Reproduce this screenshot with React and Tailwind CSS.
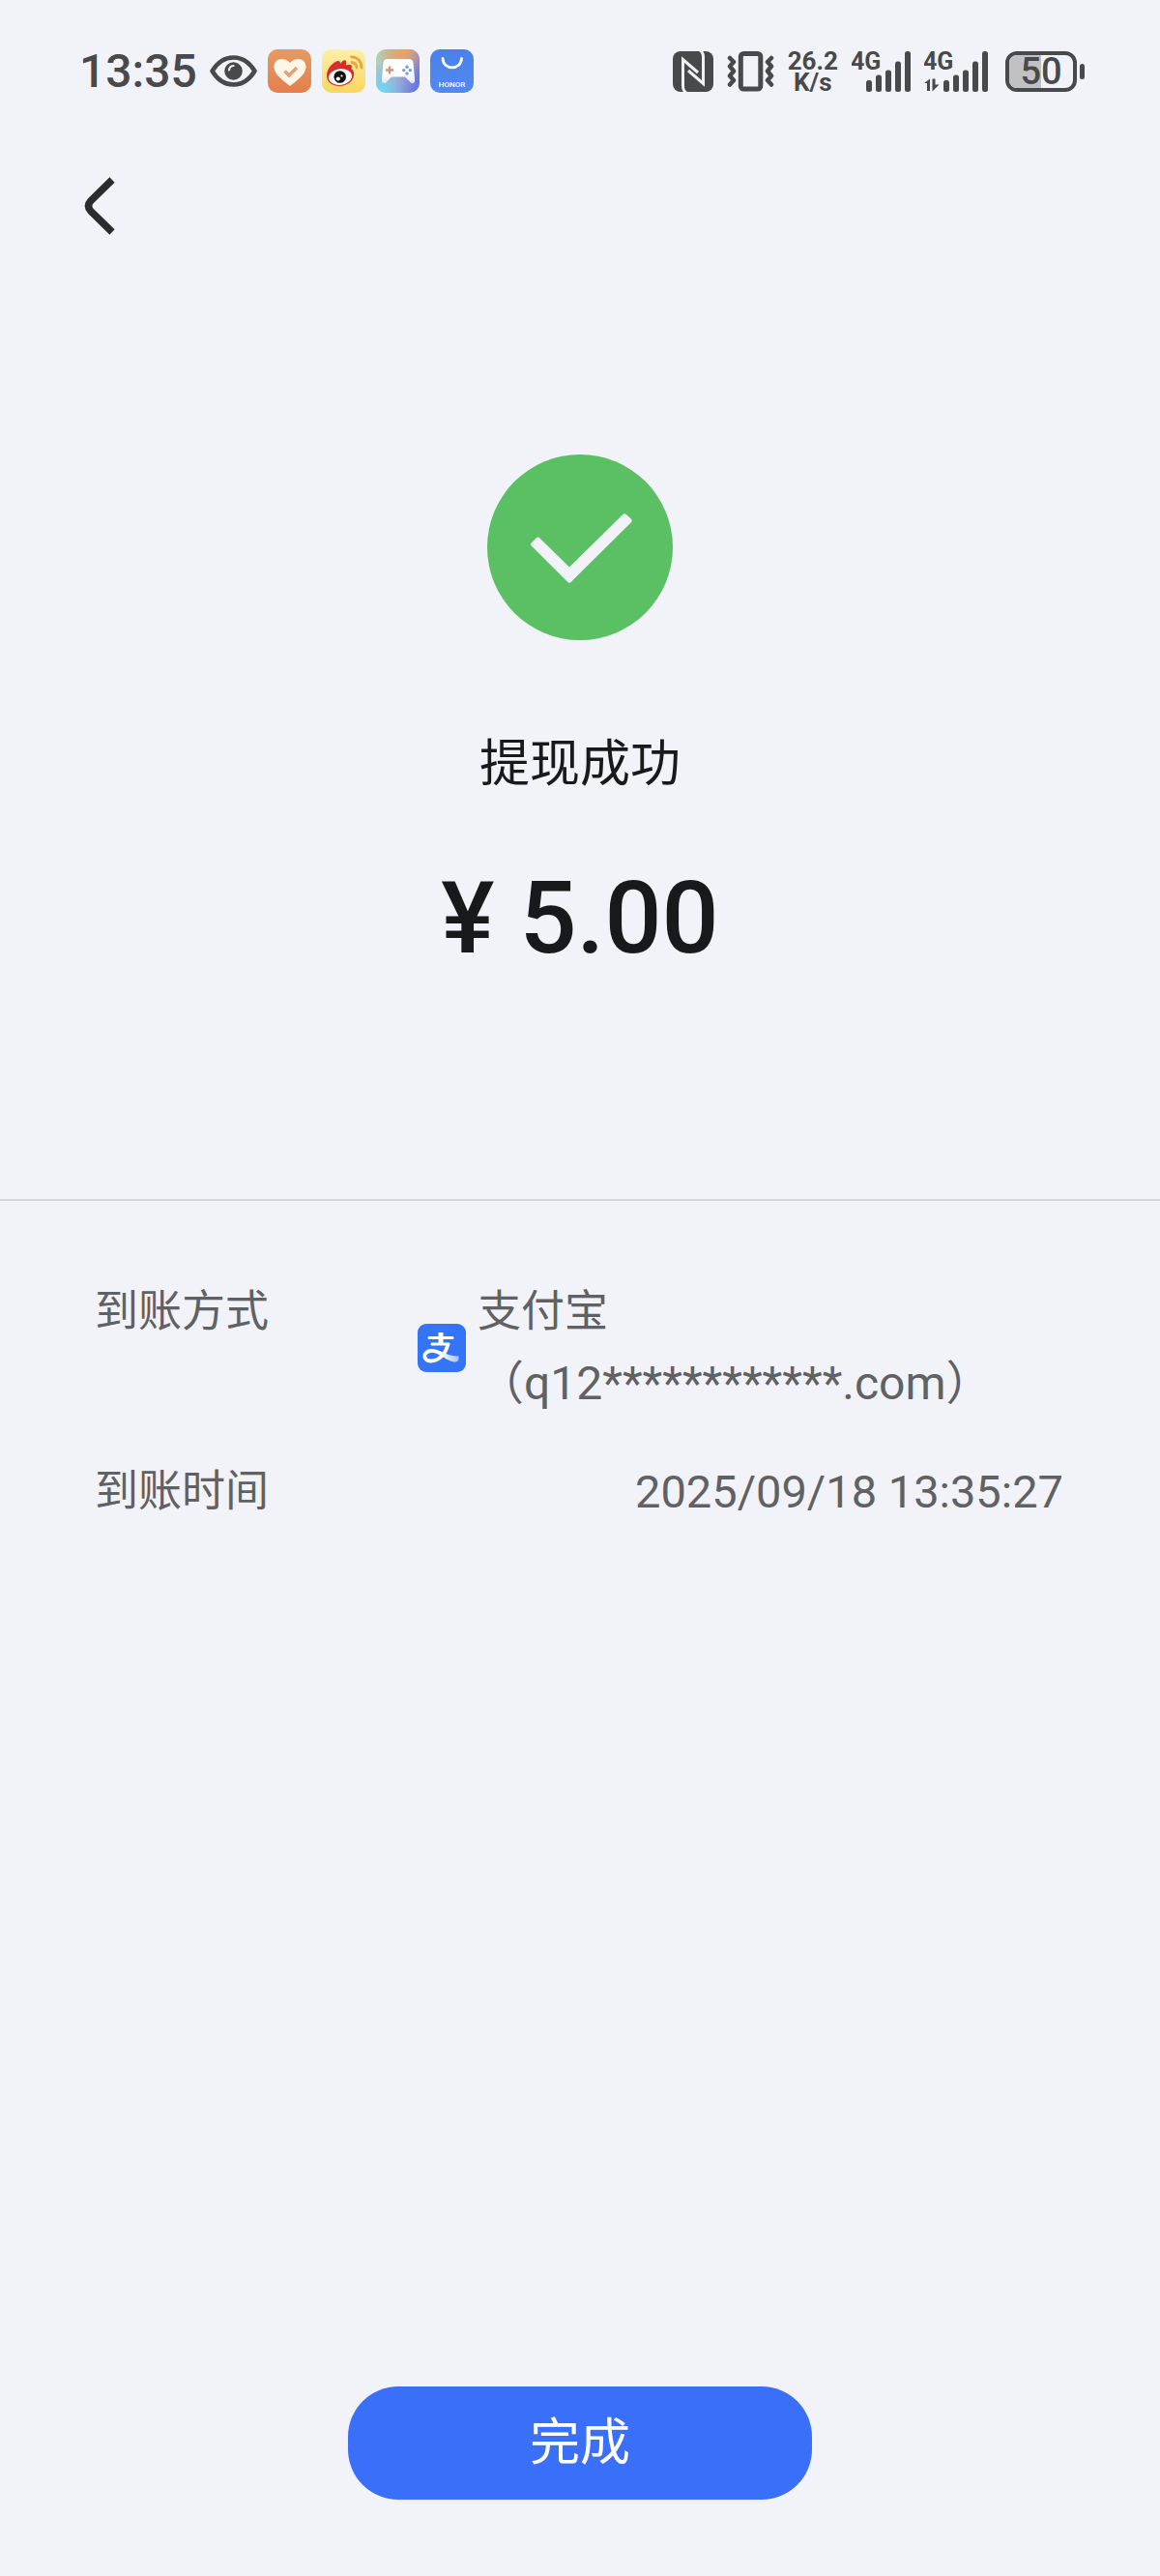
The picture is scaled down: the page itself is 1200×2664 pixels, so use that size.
import React from 'react';

const details = [
  { label: '到账方式', value: '支付宝', account: '（q12************.com）' },
  { label: '到账时间', value: '2025/09/18 13:35:27' },
];

function EyeIcon() {
  return (
    <svg width="49" height="33" viewBox="0 0 49 33" aria-hidden="true">
      <path d="M2.5 16.5C8 7.5 15.500 2.500 24.500 2.500S41 7.500 46.500 16.500C41 25.500 33.500 30.500 24.500 30.500S8 25.500 2.500 16.500Z" fill="none" stroke="#48494b" strokeWidth="4.500" strokeLinejoin="round" />
      <circle cx="24.500" cy="16.500" r="9.300" fill="#48494b" />
      <path d="M20 15.500A5 5 0 0 1 24.500 11" fill="none" stroke="#f1f2f7" strokeWidth="2.200" strokeLinecap="round" />
    </svg>
  );
}

function HealthIcon() {
  return (
    <svg width="45" height="45" viewBox="0 0 45 45" aria-hidden="true">
      <defs>
        <linearGradient id="health" x1="0" y1="0" x2="0" y2="1">
          <stop offset="0" stopColor="#e39b63" />
          <stop offset="1" stopColor="#e37f4d" />
        </linearGradient>
      </defs>
      <rect width="45" height="45" rx="10" fill="url(#health)" />
      <path d="M23 38C18 34 6.500 26 6.500 18.500C6.500 9 17 7.500 23 14C29 7.500 39.500 9 39.500 18.500C39.500 26 28 34 23 38Z" fill="#fff6ea" />
      <path d="M17.500 22.500L22 27L30 19" fill="none" stroke="#e4a273" strokeWidth="3.500" />
    </svg>
  );
}

function WeiboIcon() {
  return (
    <svg width="45" height="45" viewBox="0 0 45 45" aria-hidden="true">
      <defs>
        <linearGradient id="weibo" x1="0" y1="0" x2="0" y2="1">
          <stop offset="0" stopColor="#fdefaa" />
          <stop offset="1" stopColor="#f9d660" />
        </linearGradient>
      </defs>
      <rect width="45" height="45" rx="10" fill="url(#weibo)" />
      <path d="M5 27C5 19 13 12 17 12C19.500 12 19 15 19 15C21 12 23 10.500 24.500 11.500C26 12.500 25 16.500 25 16.500C28 15 31 15.500 31 18C31 19 30.500 20.500 30.500 20.500C32.500 21 33.500 24 33 27C32 34 25.500 38 18 38C10.500 38 5 34 5 27Z" fill="#d92d2b" />
      <ellipse cx="19" cy="28.500" rx="12" ry="8.300" transform="rotate(-7 19 28.500)" fill="#fff" />
      <circle cx="18.700" cy="28.500" r="6.300" fill="#111" />
      <circle cx="16.800" cy="30.500" r="2.100" fill="#fff" />
      <circle cx="20.500" cy="27.500" r="1.100" fill="#fff" />
      <path d="M31 13.500Q35.500 14 36 19M30.500 7.800Q40.500 8.500 41 19" fill="none" stroke="#e9a640" strokeWidth="2.800" strokeLinecap="round" />
    </svg>
  );
}

function GameIcon() {
  return (
    <svg width="45" height="45" viewBox="0 0 45 45" aria-hidden="true">
      <defs>
        <linearGradient id="gameBase" x1="0" y1="0.300" x2="1" y2="0.600">
          <stop offset="0" stopColor="#a9d7c0" />
          <stop offset="0.500" stopColor="#b8a9c4" />
          <stop offset="1" stopColor="#6579e4" />
        </linearGradient>
        <radialGradient id="gameWarm" cx="0.600" cy="0" r="0.650">
          <stop offset="0" stopColor="#f0a258" />
          <stop offset="1" stopColor="#f0a258" stopOpacity="0" />
        </radialGradient>
        <radialGradient id="gameCool" cx="0.100" cy="1" r="0.700">
          <stop offset="0" stopColor="#65e1fb" />
          <stop offset="1" stopColor="#65b4fb" stopOpacity="0" />
        </radialGradient>
        <linearGradient id="pad" x1="0" y1="0" x2="0" y2="1">
          <stop offset="0.600" stopColor="#fff" />
          <stop offset="1" stopColor="#e3e5fb" />
        </linearGradient>
      </defs>
      <rect width="45" height="45" rx="10" fill="url(#gameBase)" />
      <rect width="45" height="45" rx="10" fill="url(#gameWarm)" />
      <rect width="45" height="45" rx="10" fill="url(#gameCool)" />
      <path d="M12 10H34Q38 10 38.500 14L40 31Q40.500 35 37.500 35Q36 35 35 33.500L30 28.500H16L11 33.500Q10 35 8.500 35Q5.500 35 6 31L7.500 14Q8 10 12 10Z" fill="url(#pad)" />
      <path d="M10 21.500H18M14 17.500V25.500" stroke="#d5917a" strokeWidth="2.300" />
      <g fill="#6f9fd8">
        <circle cx="32" cy="18.300" r="1.700" />
        <circle cx="32" cy="25" r="1.700" />
        <circle cx="28.700" cy="21.600" r="1.700" />
        <circle cx="35.300" cy="21.600" r="1.700" />
      </g>
    </svg>
  );
}

function HonorIcon() {
  return (
    <svg width="45" height="45" viewBox="0 0 45 45" aria-hidden="true">
      <defs>
        <linearGradient id="honor" x1="0" y1="0" x2="0" y2="1">
          <stop offset="0" stopColor="#4a80ea" />
          <stop offset="1" stopColor="#5189f1" />
        </linearGradient>
      </defs>
      <rect width="45" height="45" rx="10" fill="url(#honor)" />
      <path d="M13 9.500C13.500 22 32 22 32.500 9.500" fill="none" stroke="#fff" strokeWidth="2.800" strokeLinecap="round" />
      <text x="22.500" y="38.500" textAnchor="middle" fontSize="8" fontWeight="500" fill="#fff">HONOR</text>
    </svg>
  );
}

function NfcIcon() {
  return (
    <svg width="42" height="42" viewBox="0 0 42 42" aria-hidden="true">
      <rect width="42" height="42" rx="8" fill="#48494b" />
      <g fill="none" stroke="#f1f2f7" strokeWidth="3">
        <path d="M14 43Q10.500 41 10.500 36V8.500L26 22" />
        <path d="M28 -1Q31.500 1 31.500 6V33.500L16 20" />
      </g>
    </svg>
  );
}

function VibrateIcon() {
  return (
    <svg width="49" height="42" viewBox="0 0 49 42" aria-hidden="true">
      <g fill="none" stroke="#48494b" strokeWidth="4.500">
        <rect x="14.300" y="2.500" width="20.500" height="36.500" rx="3" strokeWidth="5" />
        <path d="M3 7L7 11L3 15.500L7 20.500L3 25.500L7 30L3 34.500" strokeLinecap="round" strokeLinejoin="round" />
        <path d="M46 7L42 11L46 15.500L42 20.500L46 25.500L42 30L46 34.500" strokeLinecap="round" strokeLinejoin="round" />
      </g>
    </svg>
  );
}

function SignalIcon({ data }) {
  const x = data ? 20 : 15;
  return (
    <svg width={x + 46} height="58" viewBox={`0 -8 ${x + 46} 58`} fill="#48494b" aria-hidden="true">
      <text x="-1" y="19" fontSize="25" fontWeight="700">4G</text>
      {data && <path d="M0 33L6 28.500V41H3V33ZM8.500 28.500H11.500V34.500H15.500L8.500 41.500Z" />}
      <rect x={x} y="30" width="6" height="12" rx="2.500" />
      <rect x={x + 10} y="24.500" width="6" height="17.500" rx="2.500" />
      <rect x={x + 20} y="19.500" width="6" height="22.500" rx="2.500" />
      <rect x={x + 30} y="10.500" width="6" height="31.500" rx="2.500" />
      <rect x={x + 40} y="0" width="6" height="42" rx="2.500" />
    </svg>
  );
}

function Battery({ level }) {
  return (
    <div className="ml-1 flex items-center gap-[3px]">
      <div className="relative h-[42px] w-[74px] overflow-hidden rounded-xl border-4 border-[#48494b]">
        <div className="absolute inset-y-0 left-0 bg-[#c1c1c4]" style={{ width: `${level}%` }} />
        <span className="relative flex h-full items-center justify-center text-[38px] leading-none font-medium">{level}</span>
      </div>
      <div className="h-4 w-[5px] rounded-sm bg-[#48494b]" />
    </div>
  );
}

function StatusBar() {
  return (
    <header className="flex h-[45px] items-center justify-between pr-[78px] pl-[82px] text-[#48494b]">
      <div className="flex items-center gap-[11px]">
        <span className="mr-0.5 text-5xl leading-none font-medium">13:35</span>
        <EyeIcon />
        <HealthIcon />
        <WeiboIcon />
        <GameIcon />
        <HonorIcon />
      </div>
      <div className="flex items-center gap-[14px]">
        <NfcIcon />
        <VibrateIcon />
        <div className="text-center text-[26px] leading-[22px] font-bold">
          <div>26.2</div>
          <div>K/s</div>
        </div>
        <SignalIcon />
        <SignalIcon data />
        <Battery level={50} />
      </div>
    </header>
  );
}

function AlipayIcon() {
  return (
    <svg className="mr-3 shrink-0" width="50" height="50" viewBox="0 0 50 50" aria-hidden="true">
      <defs>
        <linearGradient id="tail" gradientUnits="userSpaceOnUse" x1="24" y1="0" x2="44" y2="0">
          <stop offset="0" stopColor="#fff" />
          <stop offset="1" stopColor="#9dbcfb" />
        </linearGradient>
      </defs>
      <rect width="50" height="50" rx="9" fill="#3474f6" />
      <path d="M12 14.500H36M15 21H32" fill="none" stroke="#fff" strokeWidth="3" strokeLinecap="round" />
      <path d="M24 9V21" fill="none" stroke="#fff" strokeWidth="5" />
      <path d="M31.500 20.500C30 29 23 38.500 13.500 38.500C5.500 38.500 5 29 13.500 28C18 27.500 22 29.500 27 32.500" fill="none" stroke="#fff" strokeWidth="3.800" />
      <path d="M20 27.500C29 30.500 34 33.500 42.500 33.500V36Q42 40 38 39.500C32 38.500 27 34.500 20 30.500Z" fill="url(#tail)" />
    </svg>
  );
}

export default function App() {
  return (
    <div className="flex min-h-screen flex-col bg-[#f1f3f8] pt-[51px] pb-[79px] font-[Roboto,'Noto_Sans_CJK_SC',sans-serif]" lang="zh-CN">
      <StatusBar />

      <nav className="px-[84px] pt-[84px]">
        <button type="button" aria-label="返回" className="block">
          <svg width="38" height="66" viewBox="0 0 38 66" fill="none" stroke="#2b2c2d" strokeWidth="7.500">
            <path d="M32 6L10 27.500Q5 33 10 38.500L32 60" />
          </svg>
        </button>
      </nav>

      <main className="flex flex-1 flex-col">
        <section className="flex flex-col items-center border-b-2 border-[#d3d5da] pt-56 pb-[238px] text-[#18191a]">
          <svg width="192" height="192" viewBox="0 0 192 192" aria-hidden="true">
            <circle cx="96" cy="96" r="96" fill="#5bc063" />
            <path d="M47.300 93L52.500 87.800L85 119.500L142 63.500L147.500 68.500L85 130.500Z" fill="#f1f3f8" stroke="#f1f3f8" strokeWidth="4.500" strokeLinejoin="round" />
          </svg>
          <h1 className="mt-[90px] text-[52px] leading-[78px]">提现成功</h1>
          <p className="mt-[68px] text-[104px] leading-[104px] font-medium">¥ 5.00</p>
        </section>

        <dl className="flex flex-col gap-[38px] pt-[78px] pr-[100px] pl-[98px] text-[45px] leading-[74px] text-[#606163]">
          {details.map((item) => (
            <div key={item.label} className="flex items-start justify-between">
              <dt>{item.label}</dt>
              {item.account ? (
                <dd className="flex w-2/3 items-center">
                  <AlipayIcon />
                  <div>
                    <div>{item.value}</div>
                    <div className="text-5xl leading-[74px]">{item.account}</div>
                  </div>
                </dd>
              ) : (
                <dd className="text-[47px]">{item.value}</dd>
              )}
            </div>
          ))}
        </dl>
      </main>

      <footer className="flex justify-center">
        <button type="button" className="w-2/5 rounded-[52px] bg-[#3a6ffa] py-5 text-[52px] leading-[77px] text-white">
          完成
        </button>
      </footer>
    </div>
  );
}
